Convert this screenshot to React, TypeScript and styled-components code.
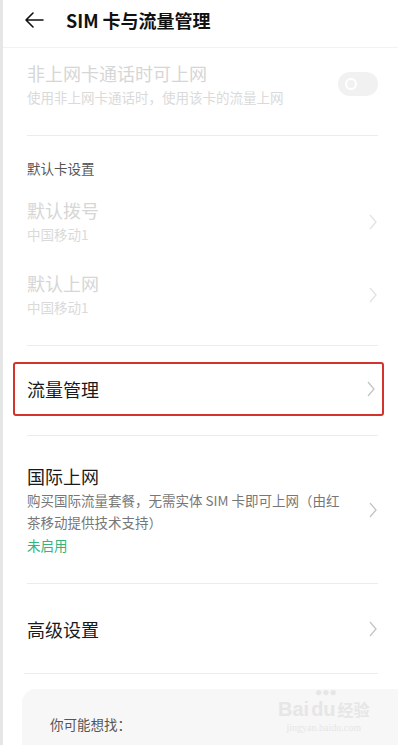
import React, { FC } from 'react';
import styled, { createGlobalStyle } from 'styled-components';

const GlobalStyle = createGlobalStyle`
    html, body {
        margin: 0;
        padding: 0;
        background: #ffffff;
    }
    body {
        font-family: "Noto Sans CJK SC", "Noto Sans", sans-serif;
    }
`

const Page = styled.div`
    width: 398px;
    height: 745px;
    overflow: hidden;
    box-sizing: border-box;
    border-left: 3px solid #e6e6e6;
    background: #fff;
    display: flex;
    flex-direction: column;
`

const Header = styled.div`
    height: 40px;
    padding: 0 0 7px 20px;
    display: flex;
    align-items: center;
    gap: 21px;
    border-bottom: 1px solid #f2f2f2;
`

const Title = styled.div`
    font-size: 18px;
    font-weight: 700;
    color: #111;
`

const Body = styled.div`
    flex: 1;
    padding: 0 20px 0 24px;
    display: flex;
    flex-direction: column;
`

const Divider = styled.div<{ $left?: number; $top?: number }>`
    height: 1px;
    flex-shrink: 0;
    background: #ececec;
    margin-left: ${p => p.$left ?? 0}px;
    margin-top: ${p => p.$top ?? 0}px;
`

const Row = styled.div<{ $height: number; $pb?: number }>`
    height: ${p => p.$height}px;
    box-sizing: border-box;
    padding-bottom: ${p => p.$pb ?? 0}px;
    flex-shrink: 0;
    display: flex;
    align-items: center;
    justify-content: space-between;
`

const Texts = styled.div`
    display: flex;
    flex-direction: column;
    gap: 1px;
`

const RowTitle = styled.div<{ $dim?: boolean }>`
    font-size: 18px;
    line-height: 24px;
    color: ${p => (p.$dim ? '#d6d6d6' : '#1a1a1a')};
`

const RowSub = styled.div<{ $dim?: boolean }>`
    font-size: 13.5px;
    line-height: 22px;
    color: ${p => (p.$dim ? '#dadada' : '#777')};
    max-width: 318px;
`

const Status = styled.div`
    font-size: 13.5px;
    line-height: 22px;
    color: #34b37a;
`

const SectionLabel = styled.div`
    font-size: 13.5px;
    line-height: 20px;
    color: #555;
    padding: 22px 0 7px 0;
`

const Toggle = styled.div`
    width: 40px;
    height: 24px;
    border-radius: 12px;
    background: #f1f1f1;
    position: relative;
    &::after {
        content: '';
        position: absolute;
        left: 7px;
        top: 6px;
        width: 8px;
        height: 8px;
        border-radius: 50%;
        border: 2px solid #fff;
    }
`

const Highlight = styled.div`
    margin: 16px -6px 19px -14px;
    padding: 0 6px 0 12px;
    border: 2px solid #d2332b;
    border-radius: 3px;
`

const Card = styled.div`
    margin: 15px -20px 0 -5px;
    flex: 1;
    background: #f7f7f7;
    border-top-left-radius: 14px;
    padding: 25px 0 0 28px;
    position: relative;
`

const CardLabel = styled.div`
    font-size: 13.5px;
    color: #555;
`

const Watermark = styled.div`
    position: absolute;
    left: 256px;
    top: -3px;
    color: #e6e6e6;
    display: flex;
    flex-direction: column;
    align-items: center;
    font-family: "Liberation Sans", sans-serif;
`

const Paw = styled.div`
    font-size: 12px;
    line-height: 12px;
    margin-left: 4px;
`

const MarkTop = styled.div`
    font-size: 20px;
    line-height: 22px;
    font-weight: 700;
    display: flex;
    align-items: flex-end;
    gap: 2px;
`

const MarkCn = styled.span`
    font-size: 16px;
    font-family: "Noto Sans CJK SC", sans-serif;
`

const MarkUrl = styled.div`
    font-size: 10px;
    font-family: "Liberation Serif", serif;
    margin-top: 2px;
`

const Chevron: FC<{ light?: boolean }> = ({ light }) => (
    <svg width="10" height="18" viewBox="0 0 10 18">
        <path d="M2 2 L8 9 L2 16" fill="none" stroke={light ? '#e2e2e2' : '#c4c4c4'} strokeWidth="1.3" />
    </svg>
)

const BackArrow: FC = () => (
    <svg width="22" height="18" viewBox="0 0 22 18">
        <path d="M20 9 H3 M10 2 L3 9 L10 16" fill="none" stroke="#111" strokeWidth="1.6" strokeLinecap="round" strokeLinejoin="round" />
    </svg>
)

const App: FC = () => {
    return (
        <Page>
            <GlobalStyle />
            <Header>
                <BackArrow />
                <Title>SIM 卡与流量管理</Title>
            </Header>
            <Body>
                <Row $height={87} $pb={15}>
                    <Texts>
                        <RowTitle $dim>非上网卡通话时可上网</RowTitle>
                        <RowSub $dim>使用非上网卡通话时，使用该卡的流量上网</RowSub>
                    </Texts>
                    <Toggle />
                </Row>
                <Divider />
                <SectionLabel>默认卡设置</SectionLabel>
                <Row $height={73}>
                    <Texts>
                        <RowTitle $dim>默认拨号</RowTitle>
                        <RowSub $dim>中国移动1</RowSub>
                    </Texts>
                    <Chevron light />
                </Row>
                <Row $height={73}>
                    <Texts>
                        <RowTitle $dim>默认上网</RowTitle>
                        <RowSub $dim>中国移动1</RowSub>
                    </Texts>
                    <Chevron light />
                </Row>
                <Divider $top={14} />
                <Highlight>
                    <Row $height={50}>
                        <RowTitle>流量管理</RowTitle>
                        <Chevron />
                    </Row>
                </Highlight>
                <Divider />
                <Row $height={147}>
                    <Texts>
                        <RowTitle>国际上网</RowTitle>
                        <RowSub>购买国际流量套餐，无需实体 SIM 卡即可上网（由红茶移动提供技术支持）</RowSub>
                        <Status>未启用</Status>
                    </Texts>
                    <Chevron />
                </Row>
                <Divider />
                <Row $height={89}>
                    <RowTitle>高级设置</RowTitle>
                    <Chevron />
                </Row>
                <Divider $left={-3} />
                <Card>
                    <CardLabel>你可能想找：</CardLabel>
                    <Watermark>
                        <Paw>●●●</Paw>
                        <MarkTop>Bai<span>du</span><MarkCn>经验</MarkCn></MarkTop>
                        <MarkUrl>jingyan.baidu.com</MarkUrl>
                    </Watermark>
                </Card>
            </Body>
        </Page>
    );
}

export default App;
